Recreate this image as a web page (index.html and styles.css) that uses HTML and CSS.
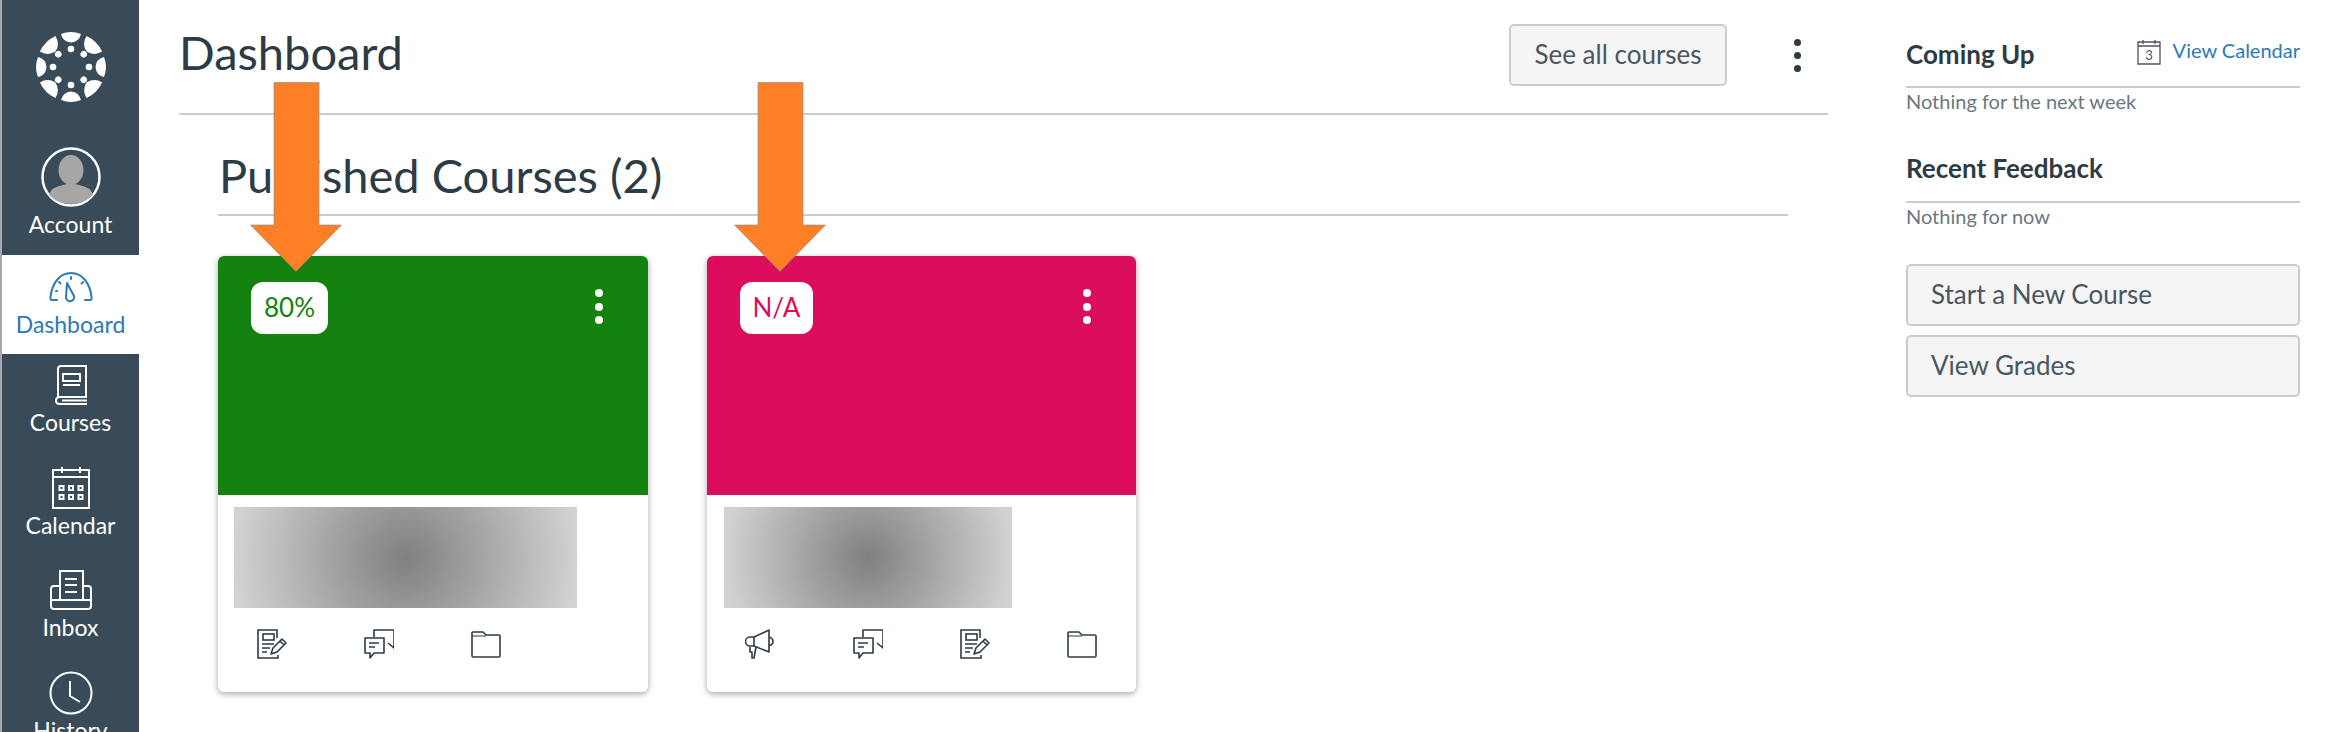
FILE: index.html
```html
<!DOCTYPE html>
<html lang="en">
<head>
  <meta charset="UTF-8">
  <title>Dashboard</title>
  <link rel="stylesheet" href="styles.css">
</head>
<body>
  <svg class="defs" width="0" height="0">
    <defs>
      <symbol id="i-assign" viewBox="0 0 30 30">
        <path d="M20 9V1H1v28h20v-3" fill="none" stroke="currentColor" stroke-width="1.6"/>
        <rect x="6" y="5" width="11" height="6" fill="none" stroke="currentColor" stroke-width="1.6"/>
        <path d="M5 15h12M5 19h8M5 23h5" stroke="currentColor" stroke-width="1.6"/>
        <path d="M14 25l2-6 9-9 4 4-9 9zM23 12l4 4" fill="none" stroke="currentColor" stroke-width="1.6" stroke-linejoin="round"/>
      </symbol>
      <symbol id="i-chat" viewBox="0 0 30 30">
        <path d="M10 8V1h20v18l-6-5" fill="none" stroke="currentColor" stroke-width="1.6" stroke-linejoin="round"/>
        <path d="M1 9h19v15H10l-4 5v-5H1z" fill="none" stroke="currentColor" stroke-width="1.6" stroke-linejoin="round"/>
        <path d="M5 14h10M5 18h6" stroke="currentColor" stroke-width="1.6"/>
      </symbol>
      <symbol id="i-folder" viewBox="0 0 30 30">
        <path d="M1 4q0-1 1-1h10l3 3h13q1 0 1 1v20q0 1-1 1H2q-1 0-1-1z" fill="none" stroke="currentColor" stroke-width="1.6" stroke-linejoin="round"/>
        <path d="M1 7h14" stroke="currentColor" stroke-width="1"/>
      </symbol>
      <symbol id="i-horn" viewBox="0 0 30 30">
        <path d="M9 8l15-7v22L9 17H5a4.500 4.500 0 0 1 0-9z" fill="none" stroke="currentColor" stroke-width="1.6" stroke-linejoin="round"/>
        <path d="M9 8v9M11 18l-2 11H7v-6H5v-5M24 8q4 1 4 4.500t-4 4" fill="none" stroke="currentColor" stroke-width="1.6" stroke-linejoin="round"/>
      </symbol>
    </defs>
  </svg>

  <nav class="sidebar">
    <div class="logo-wrap">
      <svg class="logo" viewBox="-35 -35 70 70" width="70" height="70" fill="#fff">
        <g id="quarter">
          <path d="M-10-33Q0-37 10-33Q8-25 0-24.500Q-8-25-10-33z"/>
          <circle cy="-18" r="3.300"/>
          <path d="M-11-33Q0-37 11-33Q9-24 0-22Q-9-24-11-33z" transform="rotate(45)"/>
          <circle cy="-18" r="3.300" transform="rotate(45)"/>
        </g>
        <use href="#quarter" transform="rotate(90)"/>
        <use href="#quarter" transform="rotate(180)"/>
        <use href="#quarter" transform="rotate(270)"/>
      </svg>
    </div>
    <a class="nav-item account">
      <svg viewBox="0 0 60 60" width="60" height="60">
        <circle cx="30" cy="30" r="28.500" fill="#394b58" stroke="#fff" stroke-width="2.500"/>
        <ellipse cx="30" cy="23" rx="12.500" ry="15" fill="#a6a6a6"/>
        <path d="M8 48q2-8 14-10l8-2 8 2q12 2 14 10q-9 9-22 9t-22-9z" fill="#a6a6a6"/>
      </svg>
      <span>Account</span>
    </a>
    <a class="nav-item active">
      <span class="nav-icon">
        <svg viewBox="0 0 44 32" width="44" height="32" fill="none" stroke="#2d7ab8" stroke-width="2">
          <path d="M8 29H3q-2 0-1.500-3C3 12 11 2 22 2s19 10 20.500 24q.5 3-1.500 3h-5" stroke-linecap="round"/>
          <path d="M18 12l7 13a4 4 0 0 1-8 2z" stroke-linejoin="round"/>
          <path d="M22 6v2M10 11l1.500 1.500M34 11l-1.500 1.500M7 20h1" stroke-linecap="round"/>
        </svg>
      </span>
      <span>Dashboard</span>
    </a>
    <a class="nav-item">
      <span class="nav-icon">
        <svg viewBox="0 0 34 40" width="34" height="40" fill="none" stroke="#fff" stroke-width="2">
          <path d="M4 33V4q0-3 3-3h25v31H6q-4 0-4 3.500T6 39h27"/>
          <rect x="9" y="9" width="17" height="7"/>
          <path d="M9 20h17M8 35.500h25"/>
        </svg>
      </span>
      <span>Courses</span>
    </a>
    <a class="nav-item">
      <span class="nav-icon">
        <svg viewBox="0 0 38 42" width="38" height="42" fill="none" stroke="#fff" stroke-width="2">
          <path d="M1 3h36v38H1zM1 10h36M10 0v6M28 0v6"/>
          <path d="M7.500 19h4v4h-4zM17 19h4v4h-4zM26.500 19h4v4h-4zM7.500 28h4v4h-4zM17 28h4v4h-4zM26.500 28h4v4h-4z"/>
        </svg>
      </span>
      <span>Calendar</span>
    </a>
    <a class="nav-item">
      <span class="nav-icon">
        <svg viewBox="0 0 42 40" width="42" height="40" fill="none" stroke="#fff" stroke-width="2">
          <path d="M10 29V1h23v28"/>
          <path d="M15 9h12M15 15h12M15 22h12" />
          <path d="M10 16H4q-3 0-3 3v17q0 3 3 3h34q3 0 3-3V19q0-3-3-3h-5M1 30h40"/>
        </svg>
      </span>
      <span>Inbox</span>
    </a>
    <a class="nav-item">
      <span class="nav-icon">
        <svg viewBox="0 0 44 44" width="44" height="44" fill="none" stroke="#fff" stroke-width="2">
          <circle cx="22" cy="22" r="20.500"/>
          <path d="M21 10v15l10 6"/>
        </svg>
      </span>
      <span>History</span>
    </a>
  </nav>

  <main class="content">
    <header class="page-head">
      <h1>Dashboard</h1>
      <a class="btn see-all">See all courses</a>
      <span class="kebab dark"><i></i><i></i><i></i></span>
    </header>

    <section class="courses">
      <h2>Published Courses (2)</h2>
      <div class="card-list">
        <article class="card">
          <div class="card-head green">
            <span class="badge green-text">80%</span>
            <span class="kebab"><i></i><i></i><i></i></span>
          </div>
          <div class="blur wide"></div>
          <div class="card-actions">
            <svg><use href="#i-assign"/></svg>
            <svg><use href="#i-chat"/></svg>
            <svg><use href="#i-folder"/></svg>
          </div>
        </article>
        <article class="card">
          <div class="card-head pink">
            <span class="badge pink-text">N/A</span>
            <span class="kebab"><i></i><i></i><i></i></span>
          </div>
          <div class="blur narrow"></div>
          <div class="card-actions">
            <svg><use href="#i-horn"/></svg>
            <svg><use href="#i-chat"/></svg>
            <svg><use href="#i-assign"/></svg>
            <svg><use href="#i-folder"/></svg>
          </div>
        </article>
      </div>
    </section>
  </main>

  <aside class="right-side">
    <div class="side-head">
      <h3>Coming Up</h3>
      <a class="view-cal">
        <svg viewBox="0 0 24 26" width="24" height="26" fill="none" stroke="#4a5660" stroke-width="1.300">
          <path d="M1 3h22v22H1zM1 7h22M6 1v4M18 1v4"/>
          <text x="12" y="21" text-anchor="middle" class="cal-num">3</text>
        </svg>
        <span>View Calendar</span>
      </a>
    </div>
    <p class="side-empty">Nothing for the next week</p>
    <div class="side-head second">
      <h3>Recent Feedback</h3>
    </div>
    <p class="side-empty">Nothing for now</p>
    <a class="btn side-btn first">Start a New Course</a>
    <a class="btn side-btn">View Grades</a>
  </aside>

  <svg class="arrow arrow-one" viewBox="0 0 92 190" width="92" height="190"><use href="#arrow-shape"/></svg>
  <svg class="arrow arrow-two" viewBox="0 0 92 190" width="92" height="190">
    <polygon id="arrow-shape" points="24,0.500 69,0.500 69,143 91.500,143 46,189.500 0.500,143 24,143" fill="#ff7f27" stroke="#7a8a99" stroke-width="0.600"/>
  </svg>
</body>
</html>
```

FILE: styles.css
```css
* {
  box-sizing: border-box;
}

html, body {
  height: 732px;
  margin: 0;
  overflow: hidden;
}

body {
  display: flex;
  position: relative;
  background: #fff;
  color: #2d3b45;
  font-family: Lato, "Open Sans", sans-serif;
}

.defs {
  position: absolute;
}

/* left nav */
.sidebar {
  flex: 0 0 139px;
  height: 732px;
  overflow: hidden;
  background: #394b58;
  border-left: 2px solid #a9a9a9;
  color: #fff;
}

.logo-wrap {
  height: 147px;
  padding-top: 32px;
  text-align: center;
}

.logo {
  display: inline-block;
}

.nav-item {
  display: flex;
  flex-direction: column;
  align-items: center;
  height: 102.5px;
  padding-top: 9px;
  font-size: 23px;
  line-height: 30px;
}

.nav-item.account {
  height: 108px;
  padding-top: 0;
}

.nav-item.account svg {
  margin-bottom: 2px;
}

.nav-item.active {
  height: 99px;
  padding-top: 10px;
  background: #fff;
  color: #2d7ab8;
}

.nav-icon {
  display: flex;
  align-items: center;
  justify-content: center;
  height: 44px;
}

/* main column */
.content {
  flex: 0 0 1689px;
  padding-left: 40px;
}

.page-head {
  display: flex;
  align-items: center;
  height: 115px;
  padding: 25px 0 28px;
  border-bottom: 2px solid #c7cdd1;
}

h1 {
  flex: 1;
  margin: -6px 0 0;
  font-size: 47px;
  font-weight: 400;
  line-height: 56px;
}

.btn {
  display: block;
  background: #f5f5f5;
  border: 2px solid #c7cdd1;
  border-radius: 5px;
  color: #4a5660;
  font-size: 26px;
}

.see-all {
  width: 218px;
  height: 62px;
  line-height: 56px;
  text-align: center;
}

.kebab {
  display: flex;
  flex-direction: column;
  gap: 5.500px;
}

.kebab i {
  width: 8px;
  height: 8px;
  background: #fff;
  border-radius: 50%;
}

.kebab.dark {
  gap: 6px;
  margin: 0 27px 0 67px;
}

.kebab.dark i {
  width: 7px;
  height: 7px;
  background: #2d3b45;
}

.courses {
  margin: 0 40px 0 39px;
}

h2 {
  height: 101px;
  margin: 0;
  padding: 32px 0 0 1px;
  border-bottom: 2px solid #c7cdd1;
  font-size: 47px;
  font-weight: 400;
  line-height: 56px;
}

.card-list {
  display: flex;
  gap: 59px;
  margin-top: 40px;
}

.card {
  width: 429.500px;
  height: 436px;
  background: #fff;
  border-radius: 6px;
  box-shadow: 0 2px 6px rgba(0, 0, 0, 0.35);
}

.card-head {
  display: flex;
  justify-content: space-between;
  align-items: flex-start;
  height: 239px;
  padding: 26px 45px 0 33px;
  border-radius: 6px 6px 0 0;
}

.card-head .kebab {
  margin-top: 7px;
}

.green {
  background: #14820f;
}

.pink {
  background: #dc0d5d;
}

.green-text {
  color: #14820f;
}

.pink-text {
  color: #dc0d5d;
}

.badge {
  height: 52px;
  padding: 0 13px;
  background: #fff;
  border-radius: 12px;
  font-size: 26px;
  line-height: 50px;
}

.blur {
  height: 101px;
  margin: 12px 0 0 16px;
  background: radial-gradient(circle farthest-side, #808080, #d2d2d2);
}

.blur.wide {
  width: 343px;
}

.blur.narrow {
  width: 288px;
  margin-left: 17.500px;
}

.card-actions {
  display: grid;
  grid-template-columns: repeat(4, 1fr);
  justify-items: center;
  margin-top: 21px;
  color: #2d3b45;
}

.card-actions svg {
  width: 30px;
  height: 30px;
}

/* right column */
.right-side {
  flex: 0 0 394px;
  margin-left: 78px;
  padding-top: 37px;
}

.side-head {
  display: flex;
  justify-content: space-between;
  align-items: flex-start;
  height: 51px;
  border-bottom: 2px solid #c7cdd1;
}

.side-head.second {
  height: 52px;
  margin-top: 35px;
}

h3 {
  margin: 0;
  font-size: 26px;
  font-weight: 700;
  line-height: 34px;
}

.view-cal {
  display: flex;
  gap: 12px;
  margin-top: 2px;
  color: #2d7ab8;
  font-size: 20px;
  line-height: 22px;
}

.cal-num {
  fill: #4a5660;
  stroke: none;
  font-family: Lato, sans-serif;
  font-size: 13px;
}

.side-empty {
  height: 28px;
  margin: 0;
  color: #6b7780;
  font-size: 20px;
  line-height: 26px;
}

.side-btn {
  height: 62px;
  margin-bottom: 9px;
  padding-left: 23px;
  line-height: 56px;
}

.side-btn.first {
  margin-top: 33px;
}

/* annotation arrows drawn over the page */
.arrow {
  position: absolute;
  top: 82px;
}

.arrow-one {
  left: 250px;
}

.arrow-two {
  left: 734px;
}
```
